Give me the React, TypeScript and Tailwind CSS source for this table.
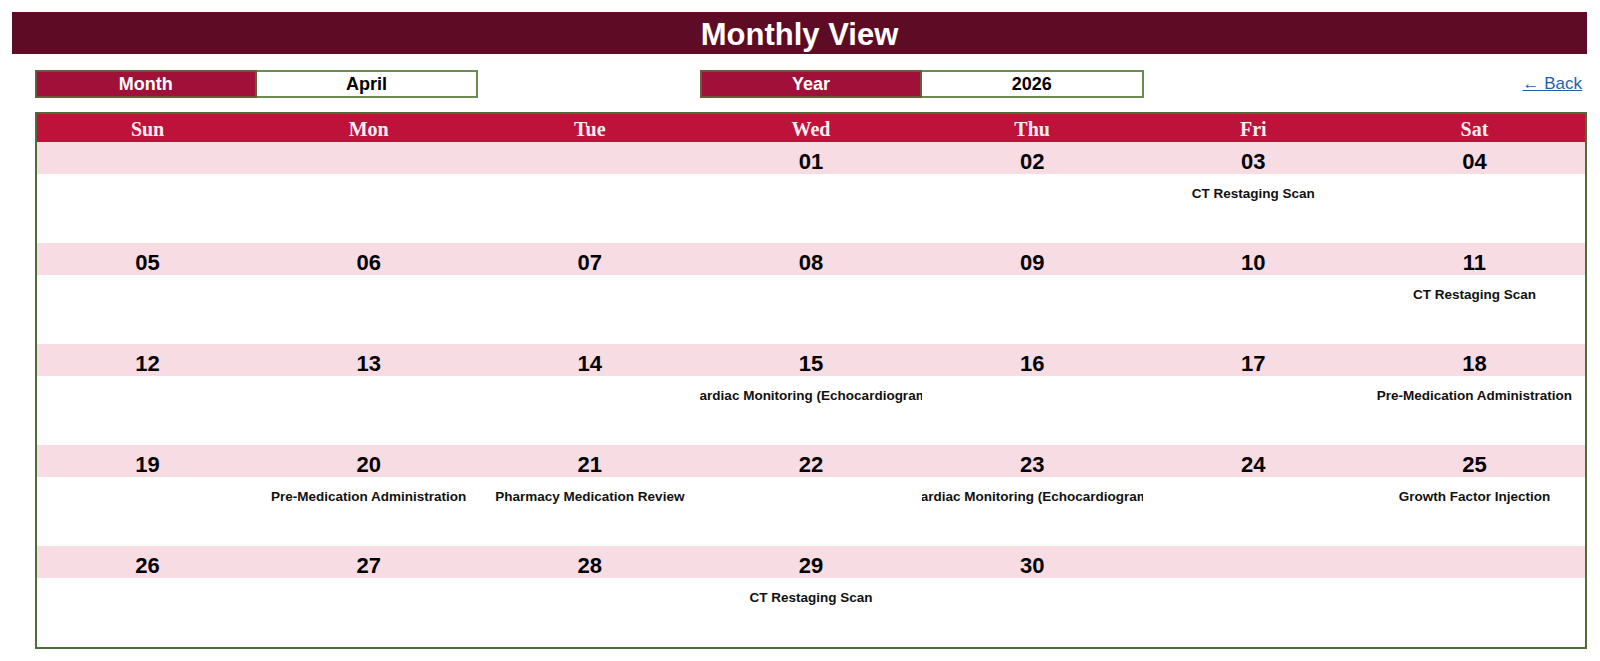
import React from 'react';

const DAYS = ['Sun', 'Mon', 'Tue', 'Wed', 'Thu', 'Fri', 'Sat'];

const EVENTS: Record<number, string> = {
  3: 'CT Restaging Scan',
  11: 'CT Restaging Scan',
  15: 'Cardiac Monitoring (Echocardiogram)',
  18: 'Pre-Medication Administration',
  20: 'Pre-Medication Administration',
  21: 'Pharmacy Medication Review',
  23: 'Cardiac Monitoring (Echocardiogram)',
  25: 'Growth Factor Injection',
  29: 'CT Restaging Scan',
};

// April 2026 starts on a Wednesday
const FIRST_WEEKDAY = 3;
const DAYS_IN_MONTH = 30;

function buildWeeks(): (number | null)[][] {
  const cells: (number | null)[] = [];
  for (let i = 0; i < FIRST_WEEKDAY; i++) cells.push(null);
  for (let d = 1; d <= DAYS_IN_MONTH; d++) cells.push(d);
  while (cells.length % 7 !== 0) cells.push(null);
  const weeks: (number | null)[][] = [];
  for (let i = 0; i < cells.length; i += 7) weeks.push(cells.slice(i, i + 7));
  return weeks;
}

function Field({ label, value }: { label: string; value: string }) {
  return (
    <>
      <div className="flex h-[28px] items-center justify-center border-2 border-[#6b5b3c] bg-[#a01038] text-[18px] font-bold text-white">
        {label}
      </div>
      <div className="flex h-[28px] items-center justify-center border-2 border-l-0 border-[#6a8c50] bg-white text-[18px] font-bold text-black">
        {value}
      </div>
    </>
  );
}

export default function App() {
  const weeks = buildWeeks();

  return (
    <div
      className="min-h-screen bg-white pl-[12px] pr-[13px] pt-[12px]"
      style={{ fontFamily: '"Liberation Sans", Arial, sans-serif' }}
    >
      {/* Title bar */}
      <div className="flex h-[42px] items-center justify-center bg-[#5e0c26] pt-[2px]">
        <h1 className="text-[31px] font-bold leading-none text-white">Monthly View</h1>
      </div>

      <div className="ml-[23px]">
        {/* Month / Year selectors */}
        <div className="mt-[16px] grid grid-cols-7">
          <Field label="Month" value="April" />
          <div />
          <Field label="Year" value="2026" />
          <div />
          <div className="flex items-center justify-end pr-[5px]">
            <a href="#" className="text-[17px] text-[#1f5fb4] underline">
              ← Back
            </a>
          </div>
        </div>

        {/* Calendar */}
        <div className="mt-[14px] border-2 border-[#4f6b3a]">
          <div className="grid h-[28px] grid-cols-7 bg-[#be123a]">
            {DAYS.map((d) => (
              <div
                key={d}
                className="flex items-center justify-center text-[20px] font-bold text-[#fbeef1]"
                style={{ fontFamily: '"Liberation Serif", "Times New Roman", serif' }}
              >
                {d}
              </div>
            ))}
          </div>

          {weeks.map((week, wi) => (
            <div key={wi}>
              <div className="grid h-[32px] grid-cols-7 bg-[#f8dce3]">
                {week.map((day, di) => (
                  <div key={di} className="flex items-center justify-center pt-[3px] text-[22px] font-bold text-black">
                    {day ? String(day).padStart(2, '0') : ''}
                  </div>
                ))}
              </div>
              <div className="grid h-[69px] grid-cols-7 bg-white">
                {week.map((day, di) => (
                  <div key={di} className="flex justify-center overflow-hidden pt-[12px]">
                    {day && EVENTS[day] ? (
                      <span className="shrink-0 whitespace-nowrap text-[13.5px] font-bold leading-[16px] text-[#111]">
                        {EVENTS[day]}
                      </span>
                    ) : null}
                  </div>
                ))}
              </div>
            </div>
          ))}
        </div>
      </div>
    </div>
  );
}
